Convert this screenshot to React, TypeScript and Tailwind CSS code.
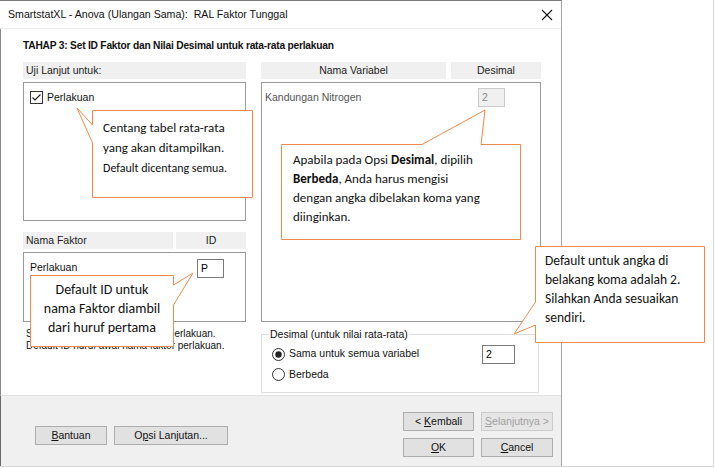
import React from "react";

const ui = { fontFamily: '"Liberation Sans", Arial, sans-serif' };
const note = { fontFamily: 'Carlito, Lato, "Open Sans", sans-serif' };

function Btn({ children, disabled, w }: { children: React.ReactNode; disabled?: boolean; w: string }) {
  return (
    <div
      className={`${w} h-[19px] flex items-center justify-center border text-[10.5px] ${
        disabled ? "border-[#cccccc] bg-[#e6e6e6] text-[#a0a0a0]" : "border-[#adadad] bg-[#e1e1e1] text-[#111]"
      }`}
    >
      {children}
    </div>
  );
}

function Head({ children, className }: { children: React.ReactNode; className?: string }) {
  return <div className={`h-[17px] bg-[#f0f0f0] flex items-center text-[10.5px] text-[#222] ${className ?? ""}`}>{children}</div>;
}

export default function App() {
  return (
    <div className="relative w-[714px] h-[467px] bg-white border-r border-b border-[#d6d6d6] flex overflow-hidden" style={ui}>
      {/* dialog */}
      <div className="w-[562px] h-full flex flex-col border-r border-[#a8a8a8] border-t border-t-[#7a7a7a]">
        <div className="h-[28px] shrink-0 flex items-center justify-between pl-[8px] pr-[6px] border-b border-[#ececec]">
          <span className="text-[10.6px] text-[#111]">SmartstatXL - Anova (Ulangan Sama):&nbsp; RAL Faktor Tunggal</span>
          <svg width="12" height="12" viewBox="0 0 12 12" className="mr-[2px]">
            <path d="M1 1 L11 11 M11 1 L1 11" stroke="#111" strokeWidth="1.1" />
          </svg>
        </div>

        <div className="flex-1 pl-[22px] pr-[20px] border-l border-[#8a8a8a]">
          <div className="h-[33px] flex items-center text-[10.2px] font-bold text-[#111] tracking-[-0.2px]">
            TAHAP 3: Set ID Faktor dan Nilai Desimal untuk rata-rata perlakuan
          </div>
          <div className="flex gap-[15px]">
            {/* left column */}
            <div className="w-[223px] flex flex-col">
              <Head className="pl-[3px]">Uji Lanjut untuk:</Head>
              <div className="mt-[3px] h-[139px] border border-[#9a9a9a] pt-[7px] pl-[6px]">
                <div className="flex items-center gap-[4px]">
                  <svg width="13" height="13" viewBox="0 0 13 13">
                    <rect x="0.5" y="0.5" width="12" height="12" fill="white" stroke="#333" />
                    <path d="M2.5 6.5 L5 9 L10.5 3.5" fill="none" stroke="#222" strokeWidth="1.2" />
                  </svg>
                  <span className="text-[10.5px] text-[#111]">Perlakuan</span>
                </div>
              </div>
              <div className="mt-[11px] flex gap-[3px]">
                <Head className="w-[150px] pl-[3px]">Nama Faktor</Head>
                <Head className="flex-1 justify-center">ID</Head>
              </div>
              <div className="mt-[3px] h-[70px] border border-[#9a9a9a] flex justify-between pl-[6px] pr-[21px] pt-[6px]">
                <span className="text-[10.5px] text-[#111] mt-[1px]">Perlakuan</span>
                <div className="w-[27px] h-[19px] border border-[#7a7a7a] text-[10.5px] pl-[3px] leading-[17px]">P</div>
              </div>
              <div className="mt-[6px] pl-[3px] text-[10px] leading-[12px] text-[#111] whitespace-nowrap">
                <div>Set ID untuk setiap nama faktor perlakuan.</div>
                <div>Default ID huruf awal nama faktor perlakuan.</div>
              </div>
            </div>

            {/* right column */}
            <div className="w-[280px] flex flex-col">
              <div className="flex gap-[5px]">
                <Head className="w-[185px] justify-center">Nama Variabel</Head>
                <Head className="flex-1 justify-center">Desimal</Head>
              </div>
              <div className="mt-[3px] h-[240px] border border-[#9a9a9a] flex justify-between items-start pl-[3px] pr-[35px] pt-[5px]">
                <span className="text-[10.5px] text-[#555] mt-[2px]">Kandungan Nitrogen</span>
                <div className="w-[27px] h-[19px] border border-[#cccccc] bg-[#f0f0f0] text-[10.5px] text-[#8a8a8a] pl-[3px] leading-[17px]">
                  2
                </div>
              </div>
              <fieldset className="mt-[5px] h-[66px] border border-[#dcdcdc] pl-[10px] pr-[23px] w-[278px]">
                <legend className="text-[10.5px] text-[#111] px-[1px] ml-[-3px]">Desimal (untuk nilai rata-rata)</legend>
                <div className="flex items-center justify-between mt-[2px]">
                  <div className="flex items-center gap-[4px]">
                    <svg width="13" height="13" viewBox="0 0 13 13">
                      <circle cx="6.5" cy="6.5" r="6" fill="white" stroke="#333" />
                      <circle cx="6.5" cy="6.5" r="3.2" fill="#222" />
                    </svg>
                    <span className="text-[10.5px] text-[#111]">Sama untuk semua variabel</span>
                  </div>
                  <div className="w-[33px] h-[19px] border border-[#7a7a7a] text-[10.5px] pl-[3px] leading-[17px]">2</div>
                </div>
                <div className="flex items-center gap-[4px] mt-[3px]">
                  <svg width="13" height="13" viewBox="0 0 13 13">
                    <circle cx="6.5" cy="6.5" r="6" fill="white" stroke="#333" />
                  </svg>
                  <span className="text-[10.5px] text-[#111]">Berbeda</span>
                </div>
              </fieldset>
            </div>
          </div>
        </div>

        {/* button bar */}
        <div className="h-[71px] shrink-0 bg-[#f0f0f0] border-t border-[#e2e2e2] border-l border-l-[#6a6a6a] flex justify-between">
          <div className="flex gap-[7px] mt-[30px] ml-[34px]">
            <Btn w="w-[72px]"><span><u>B</u>antuan</span></Btn>
            <Btn w="w-[114px]"><span>O<u>p</u>si Lanjutan...</span></Btn>
          </div>
          <div className="flex flex-col gap-[7px] mt-[16px] mr-[8px]">
            <div className="flex gap-[7px]">
              <Btn w="w-[71px]"><span>&lt; <u>K</u>embali</span></Btn>
              <Btn w="w-[72px]" disabled><span><u>S</u>elanjutnya &gt;</span></Btn>
            </div>
            <div className="flex gap-[7px]">
              <Btn w="w-[71px]"><span><u>O</u>K</span></Btn>
              <Btn w="w-[72px]"><span><u>C</u>ancel</span></Btn>
            </div>
          </div>
        </div>
      </div>

      {/* callouts */}
      <svg className="absolute left-0 top-0 pointer-events-none" width="715" height="468">
        <g fill="white" stroke="#EE8A4F" strokeWidth="1">
          <path d="M92.5 110.5 H252.5 V197.5 H92.5 V143 L77 108 L92.5 125 Z" />
          <path d="M281.5 144.5 H422 L485 110 L481 144.5 H520.5 V239.5 H281.5 Z" />
          <path d="M535.5 246.5 H704.5 V342.5 H535.5 V325 L514 334 L535.5 302 Z" />
          <path d="M30.5 275.5 H173.5 V285 L193 273 L173.5 305 V346.5 H30.5 Z" />
        </g>
      </svg>

      <div className="absolute left-[103px] top-[118px] text-[13px] leading-[20px] text-[#111]" style={note}>
        <div>Centang tabel rata-rata</div>
        <div>yang akan ditampilkan.</div>
        <div className="text-[12px]">Default dicentang semua.</div>
      </div>

      <div className="absolute left-[293px] top-[150px] text-[13px] leading-[19px] text-[#111]" style={note}>
        <div>
          Apabila pada Opsi <b>Desimal</b>, dipilih
        </div>
        <div>
          <b>Berbeda</b>, Anda harus mengisi
        </div>
        <div>dengan angka dibelakan koma yang</div>
        <div>diinginkan.</div>
      </div>

      <div className="absolute left-[545px] top-[251px] text-[13.5px] leading-[19px] text-[#111]" style={note}>
        <div>Default untuk angka di</div>
        <div>belakang koma adalah 2.</div>
        <div>Silahkan Anda sesuaikan</div>
        <div>sendiri.</div>
      </div>

      <div className="absolute left-[31px] top-[280px] w-[142px] text-center text-[14px] leading-[19px] text-[#111]" style={note}>
        <div>Default ID untuk</div>
        <div>nama Faktor diambil</div>
        <div>dari huruf pertama</div>
      </div>
    </div>
  );
}
